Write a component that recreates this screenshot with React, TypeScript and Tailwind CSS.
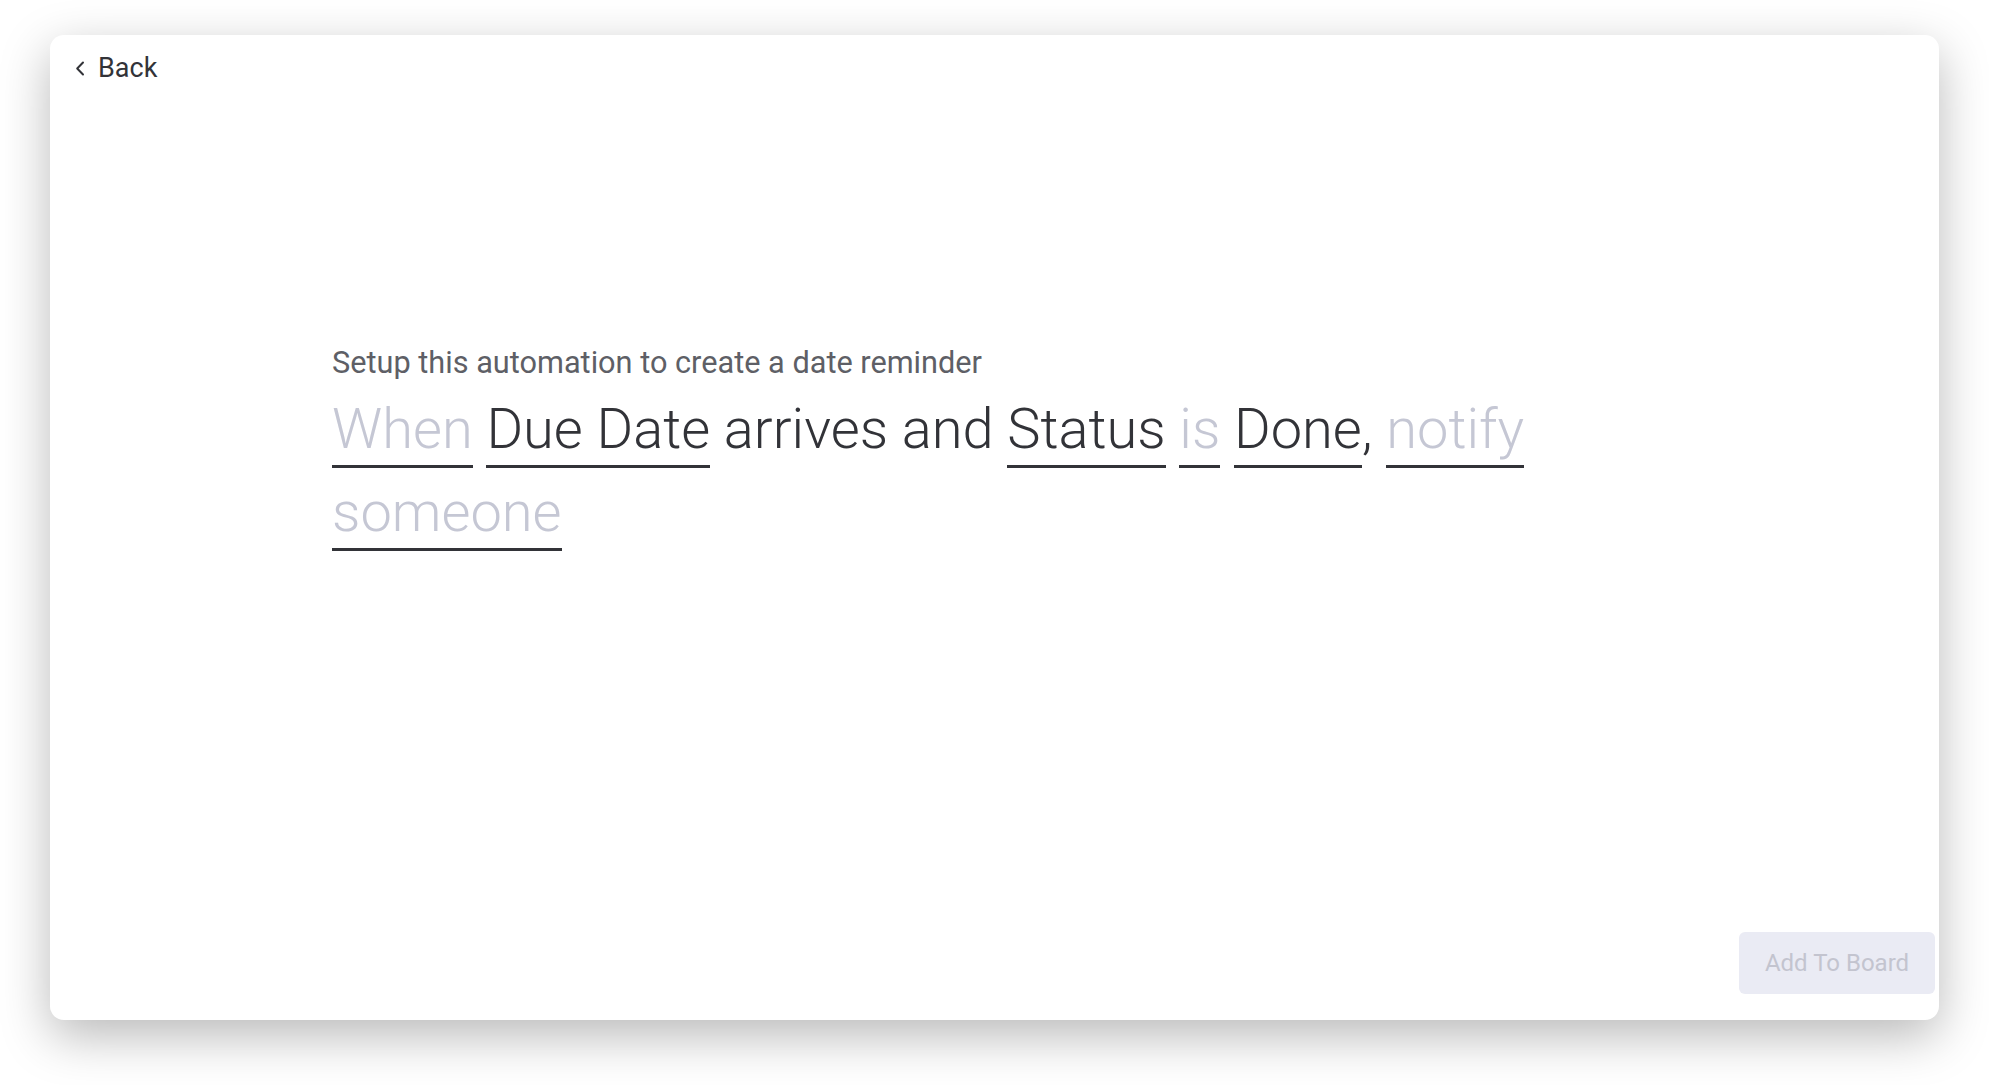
import React from 'react';

type Part = { text: string; tone: 'dark' | 'light'; underline: boolean };

const parts: Part[] = [
  { text: 'When', tone: 'light', underline: true },
  { text: 'Due Date', tone: 'dark', underline: true },
  { text: 'arrives and', tone: 'dark', underline: false },
  { text: 'Status', tone: 'dark', underline: true },
  { text: 'is', tone: 'light', underline: true },
  { text: 'Done', tone: 'dark', underline: true },
  { text: 'notify', tone: 'light', underline: true },
  { text: 'someone', tone: 'light', underline: true },
];

function Word({ part, comma }: { part: Part; comma?: boolean }) {
  const color = part.tone === 'dark' ? 'text-[#323338]' : 'text-[#c5c7d4]';
  if (!part.underline) {
    return <span className={color}>{part.text}</span>;
  }
  return (
    <>
      <span className={`my-[4px] inline-block border-b-[3px] border-[#323338] leading-[72px] ${color}`}>
        {part.text}
      </span>
      {comma && <span className="text-[#323338]">,</span>}
    </>
  );
}

export default function App() {
  return (
    <div
      className="min-h-screen w-full bg-white pt-[35px] pl-[50px]"
      style={{ fontFamily: 'Roboto, "Noto Sans", sans-serif' }}
    >
      <div className="relative flex h-[985px] w-[1889px] flex-col rounded-[14px] bg-white shadow-[0_16px_50px_rgba(0,0,0,0.28)]">
        {/* header */}
        <div className="flex items-center pl-[25px] pt-[17px]">
          <button className="flex items-center gap-[13px] text-[27px] leading-[32px] text-[#323338]">
            <svg width="10" height="15" viewBox="0 0 10 15" fill="none">
              <path d="M8 1.5L2.2 7.5 8 13.5" stroke="#323338" strokeWidth="2" strokeLinecap="round" strokeLinejoin="round" />
            </svg>
            Back
          </button>
        </div>

        {/* sentence */}
        <div className="mx-auto mt-[261px] w-[1325px]">
          <h2 className="text-[30.7px] leading-[36px] text-[#5e5f66]">
            Setup this automation to create a date reminder
          </h2>
          <p className="mt-[8px] text-[56px] font-light leading-[80px]">
            {parts.map((p, i) => (
              <React.Fragment key={i}>
                <Word part={p} comma={p.text === 'Done'} />{' '}
              </React.Fragment>
            ))}
          </p>
        </div>

        {/* footer */}
        <div className="mt-auto flex justify-end pb-[26px] pr-[4px]">
          <button className="h-[62px] w-[196px] rounded-[6px] bg-[#eaebf4] text-[24px] text-[#c3c4cf]">
            Add To Board
          </button>
        </div>
      </div>
    </div>
  );
}
